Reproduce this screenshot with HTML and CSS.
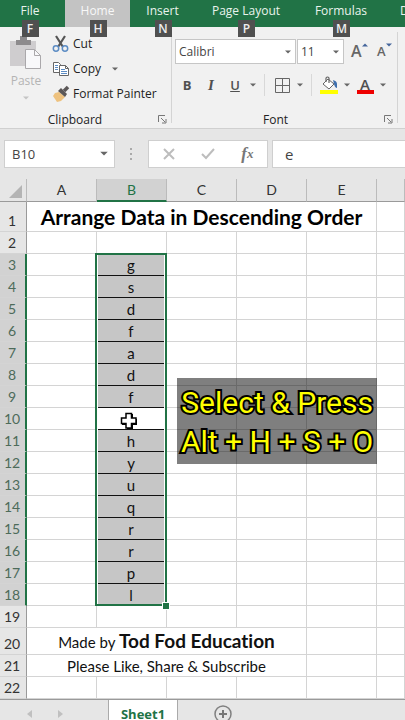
FILE: index.html
```html
<!DOCTYPE html>
<html lang="en">
  <head>
    <meta charset="UTF-8" />
    <meta name="viewport" content="width=device-width, initial-scale=1.0" />
    <title>Arrange Data in Descending Order</title>
    <link rel="stylesheet" href="styles.css">
  </head>
  <body>
    <!-- shared caret -->
    <svg class="defs" width="0" height="0">
      <symbol id="caret" viewBox="0 0 6 4"><path d="M0 0.5h6L3 3.5z" fill="currentColor" /></symbol>
      <symbol id="launcher" viewBox="0 0 9 9">
        <path d="M0.5 7V0.5H7M3 3l4 4M8 4v4H4" fill="none" stroke="currentColor" />
      </symbol>
    </svg>

    <nav class="tabs">
      <button class="tab file">File<kbd>F</kbd></button>
      <button class="tab active">Home<kbd>H</kbd></button>
      <button class="tab insert">Insert<kbd>N</kbd></button>
      <button class="tab layout">Page Layout<kbd>P</kbd></button>
      <button class="tab formulas">Formulas<kbd>M</kbd></button>
      <button class="tab data">Data</button>
    </nav>

    <div class="ribbon">
      <section class="group clipboard">
        <div class="tools">
          <button class="paste" disabled>
            <svg width="32" height="34" viewBox="0 0 32 34">
              <path d="M0 5h26v25H0z" fill="#cfcdcf" />
              <path d="M6 4h4V0h7v4h4v5H6z" fill="#8d8b8d" />
              <path d="M15.500 13.500h9l6 6v13h-15z" fill="#f8f8fa" stroke="#aaa8ab" />
              <path d="M24.500 13.500v6h6" fill="none" stroke="#aaa8ab" />
            </svg>
            <span>Paste</span>
            <svg class="caret" width="6" height="4"><use href="#caret" /></svg>
          </button>
          <div class="actions">
            <button>
              <svg width="18" height="18" viewBox="0 0 18 18">
                <path d="M4 1l7 11M13 1L6 12" stroke="#555" stroke-width="2.200" fill="none" />
                <circle cx="4" cy="13.500" r="2.700" fill="none" stroke="#5c8cc4" stroke-width="1.500" />
                <circle cx="13" cy="13.500" r="2.700" fill="none" stroke="#5c8cc4" stroke-width="1.500" />
              </svg>
              Cut
            </button>
            <button>
              <svg width="18" height="18" viewBox="0 0 18 18">
                <path d="M1.500 2.500h5l2 2v8h-7z" fill="#fff" stroke="#666" />
                <path d="M3 5.500h3M3 7.500h3M3 9.500h3" stroke="#5c8cc4" />
                <path d="M7.500 5.500h6l3 3v7h-9z" fill="#fff" stroke="#666" />
                <path d="M13.500 5.500v3h3" fill="none" stroke="#666" />
                <path d="M9 9.500h4M9 11.500h6M9 13.500h6" stroke="#5c8cc4" />
              </svg>
              Copy
              <svg class="caret" width="6" height="4"><use href="#caret" /></svg>
            </button>
            <button>
              <svg width="18" height="18" viewBox="0 0 18 18">
                <path d="M3 8l4-1 6 5-4 4-4 1-4-6z" fill="#eec27f" />
                <path d="M6 6l3-3 6 6-2 3z" fill="#5b5757" />
                <path d="M12 6l4-4" stroke="#5b5757" stroke-width="3.500" />
              </svg>
              Format Painter
            </button>
          </div>
        </div>
        <div class="group-name">Clipboard</div>
        <button class="launch" aria-label="Clipboard settings"><svg width="9" height="9"><use href="#launcher" /></svg></button>
      </section>

      <section class="group font">
        <div class="tools">
          <div class="row pickers">
            <label class="picker family">
              <select aria-label="Font"><option>Calibri</option></select>
              <svg class="caret" width="6" height="4"><use href="#caret" /></svg>
            </label>
            <label class="picker size">
              <select aria-label="Font size"><option>11</option></select>
              <svg class="caret" width="6" height="4"><use href="#caret" /></svg>
            </label>
            <button class="resize grow" aria-label="Increase font size">A<svg width="6" height="4" viewBox="0 0 6 4"><path d="M0 3.500h6L3 0.500z" fill="#44659b" /></svg></button>
            <button class="resize shrink" aria-label="Decrease font size">A<svg width="6" height="4" viewBox="0 0 6 4"><path d="M0 0.500h6L3 3.500z" fill="#44659b" /></svg></button>
          </div>
          <div class="row styles">
            <button class="tool"><b>B</b></button>
            <button class="tool"><i>I</i></button>
            <button class="tool"><u>U</u></button>
            <button class="more" aria-label="Underline options"><svg class="caret" width="6" height="4"><use href="#caret" /></svg></button>
            <span class="divider"></span>
            <button class="tool" aria-label="Borders">
              <svg width="15" height="15" viewBox="0 0 15 15"><path d="M0.500 0.500h14v14h-14zM7.500 0v15M0 7.500h15" fill="none" stroke="#666" /></svg>
            </button>
            <button class="more" aria-label="Border options"><svg class="caret" width="6" height="4"><use href="#caret" /></svg></button>
            <span class="divider"></span>
            <button class="tool" aria-label="Fill colour">
              <svg width="18" height="18" viewBox="0 0 18 18">
                <path d="M8 3l6 5-5 5-6-5z" fill="#fff" stroke="#666" />
                <path d="M6 6V2q1.500-2 3 0v5" fill="none" stroke="#666" stroke-width="1.200" />
                <path d="M13 4q4 1 4 4v4q-2 0-3-4z" fill="#3f6fae" />
                <path d="M0 14h18v4H0z" fill="#ff0" />
              </svg>
            </button>
            <button class="more" aria-label="Fill options"><svg class="caret" width="6" height="4"><use href="#caret" /></svg></button>
            <button class="tool color">A</button>
            <button class="more" aria-label="Font colour options"><svg class="caret" width="6" height="4"><use href="#caret" /></svg></button>
          </div>
        </div>
        <div class="group-name">Font</div>
        <button class="launch" aria-label="Font settings"><svg width="9" height="9"><use href="#launcher" /></svg></button>
      </section>
    </div>

    <div class="formula-bar">
      <label class="name-box">
        <input type="text" value="B10" aria-label="Name box">
        <svg class="caret" width="8" height="5"><use href="#caret" /></svg>
      </label>
      <svg class="dots" width="2" height="12" viewBox="0 0 2 12"><path d="M0 0h2v2H0zM0 5h2v2H0zM0 10h2v2H0z" fill="#aaa" /></svg>
      <div class="entry">
        <button aria-label="Cancel"><svg width="12" height="12" viewBox="0 0 12 12"><path d="M1 1l10 10M11 1L1 11" stroke="#bdbdbd" stroke-width="2" /></svg></button>
        <button aria-label="Enter"><svg width="14" height="12" viewBox="0 0 14 12"><path d="M1 6l4 4 8-9" fill="none" stroke="#bdbdbd" stroke-width="2" /></svg></button>
        <button class="fx"><i>f</i><sub>x</sub></button>
      </div>
      <input class="formula" type="text" value="e" aria-label="Formula">
    </div>

    <main class="sheet">
      <table>
        <colgroup>
          <col class="num"><col class="col"><col class="col"><col class="col"><col class="col"><col class="col"><col>
        </colgroup>
        <thead>
          <tr>
            <th class="corner"><svg width="13" height="13" viewBox="0 0 13 13"><path d="M13 0v13H0z" fill="#b4b4b4" /></svg></th>
            <th>A</th><th class="picked">B</th><th>C</th><th>D</th><th>E</th><th></th>
          </tr>
        </thead>
        <tbody>
          <tr class="title"><th>1</th><td colspan="5">Arrange Data in Descending Order</td><td></td></tr>
          <tr><th>2</th><td></td><td></td><td></td><td></td><td></td><td></td></tr>
          <tr class="sel"><th>3</th><td></td><td class="pick first"><span>g</span></td><td></td><td></td><td></td><td></td></tr>
          <tr class="sel"><th>4</th><td></td><td class="pick"><span>s</span></td><td></td><td></td><td></td><td></td></tr>
          <tr class="sel"><th>5</th><td></td><td class="pick"><span>d</span></td><td></td><td></td><td></td><td></td></tr>
          <tr class="sel"><th>6</th><td></td><td class="pick"><span>f</span></td><td></td><td></td><td></td><td></td></tr>
          <tr class="sel"><th>7</th><td></td><td class="pick"><span>a</span></td><td></td><td></td><td></td><td></td></tr>
          <tr class="sel"><th>8</th><td></td><td class="pick"><span>d</span></td><td></td><td></td><td></td><td></td></tr>
          <tr class="sel"><th>9</th><td></td><td class="pick"><span>f</span></td><td></td><td></td><td></td><td></td></tr>
          <tr class="sel"><th>10</th><td></td><td class="pick current"><span>
            <svg class="pointer" width="18" height="18" viewBox="0 0 18 18">
              <path d="M7 2h6v5h4v6h-4v4H7v-4H2V7h5z" fill="#000" />
              <path d="M6 1.500h5.500v4.500h4.500v5.500h-4.500v4.500H6v-4.500H1.500V6H6z" fill="#fff" stroke="#000" stroke-width="1.500" />
            </svg>
          </span></td><td></td><td></td><td></td><td></td></tr>
          <tr class="sel"><th>11</th><td></td><td class="pick"><span>h</span></td><td></td><td></td><td></td><td></td></tr>
          <tr class="sel"><th>12</th><td></td><td class="pick"><span>y</span></td><td></td><td></td><td></td><td></td></tr>
          <tr class="sel"><th>13</th><td></td><td class="pick"><span>u</span></td><td></td><td></td><td></td><td></td></tr>
          <tr class="sel"><th>14</th><td></td><td class="pick"><span>q</span></td><td></td><td></td><td></td><td></td></tr>
          <tr class="sel"><th>15</th><td></td><td class="pick"><span>r</span></td><td></td><td></td><td></td><td></td></tr>
          <tr class="sel"><th>16</th><td></td><td class="pick"><span>r</span></td><td></td><td></td><td></td><td></td></tr>
          <tr class="sel"><th>17</th><td></td><td class="pick"><span>p</span></td><td></td><td></td><td></td><td></td></tr>
          <tr class="sel"><th>18</th><td></td><td class="pick last"><span>l</span></td><td></td><td></td><td></td><td></td></tr>
          <tr><th>19</th><td></td><td></td><td></td><td></td><td></td><td></td></tr>
          <tr class="credit"><th>20</th><td colspan="4">Made by <b>Tod Fod Education</b></td><td></td><td></td></tr>
          <tr><th>21</th><td colspan="4">Please Like, Share &amp; Subscribe</td><td></td><td></td></tr>
          <tr><th>22</th><td></td><td></td><td></td><td></td><td></td><td></td></tr>
        </tbody>
      </table>
      <p class="caption">Select &amp; Press<br>Alt + H + S + O</p>
    </main>

    <footer class="sheet-tabs">
      <button class="arrow" aria-label="Previous sheet"><svg width="5" height="8" viewBox="0 0 5 8"><path d="M5 0v8L0 4z" fill="#c0c0c0" /></svg></button>
      <button class="arrow" aria-label="Next sheet"><svg width="5" height="8" viewBox="0 0 5 8"><path d="M0 0v8l5-4z" fill="#c0c0c0" /></svg></button>
      <button class="sheet-tab">Sheet1</button>
      <button class="add" aria-label="New sheet">
        <svg width="18" height="18" viewBox="0 0 18 18"><circle cx="9" cy="9" r="8" fill="none" stroke="#808080" stroke-width="1.500" /><path d="M9 5v8M5 9h8" stroke="#777" stroke-width="2" /></svg>
      </button>
    </footer>
  </body>
</html>
```
FILE: styles.css
```css
* {
  box-sizing: border-box;
}

body {
  margin: 0;
  height: 100vh;
  overflow: hidden;
  display: flex;
  flex-direction: column;
  font-family: "Open Sans", "Noto Sans", sans-serif;
  font-size: 12px;
  color: #222;
  background-color: #e6e6e6;
}

button,
input,
select {
  font: inherit;
  color: inherit;
  background: none;
  border: none;
  border-radius: 0;
  padding: 0;
  margin: 0;
}

svg {
  display: block;
  flex: none;
}

.defs {
  position: absolute;
}

.caret {
  color: #666;
}

/* tabs */
.tabs {
  display: flex;
  flex: none;
  height: 27px;
  background-color: #217346;
  color: #e9f3ed;
}

.tab {
  position: relative;
  flex: none;
  width: 65px;
  padding-bottom: 6px;
  white-space: nowrap;
}

.tab.file {
  padding-right: 5px;
}

.tab.active {
  background-color: #c3c3c3;
  color: #f8f8f8;
}

.tab.layout {
  width: 102px;
}

.tab.formulas {
  width: 88px;
}

.tab.data {
  flex: 1;
  min-width: 0;
  padding-left: 15px;
  overflow: hidden;
  text-align: left;
}

.tab kbd {
  position: absolute;
  z-index: 1;
  top: 20px;
  left: calc(50% - 8px);
  width: 17px;
  height: 17px;
  font: 600 12px/17px "Open Sans", sans-serif;
  color: #eee;
  background-color: #505050;
}

.tab.file kbd {
  left: calc(50% - 11px);
}

/* ribbon */
.ribbon {
  display: flex;
  flex: none;
  background-color: #f1f1f1;
  border-bottom: 1px solid #d0d0d0;
}

.group {
  position: relative;
  flex: none;
  padding-top: 4px;
}

.group::after {
  content: "";
  position: absolute;
  top: 5px;
  bottom: 5px;
  right: 0;
  border-right: 1px solid #d4d4d4;
}

.group.clipboard {
  width: 172px;
}

.group.font {
  width: 226px;
  padding-left: 3px;
}

.tools {
  height: 75px;
}

.group-name {
  padding: 5px 22px 0 0;
  line-height: 17px;
  text-align: center;
}

.launch {
  position: absolute;
  right: 5px;
  bottom: 4px;
  color: #777;
}

.clipboard .tools {
  display: flex;
}

.paste {
  display: flex;
  flex-direction: column;
  align-items: center;
  width: 52px;
  padding-top: 5px;
  color: #b4b4b4;
}

.paste span {
  line-height: 22px;
}

.paste .caret {
  margin-top: 4px;
  color: #c4c4c4;
}

.actions button {
  display: flex;
  align-items: center;
  gap: 3px;
  height: 25px;
}

.actions .caret {
  margin-left: 8px;
}

.row {
  display: flex;
  align-items: center;
}

.pickers {
  height: 40px;
  gap: 1px;
}

.styles {
  height: 28px;
}

.picker {
  position: relative;
  height: 25px;
  background-color: #fff;
  border: 1px solid #c6c6c6;
}

.picker select {
  appearance: none;
  width: 100%;
  height: 100%;
  padding-left: 3px;
  color: #444;
}

.picker .caret {
  position: absolute;
  top: 10px;
  right: 4px;
}

.family {
  width: 121px;
}

.size {
  width: 47px;
}

.resize {
  display: flex;
  align-items: center;
  width: 25px;
  font-size: 16px;
  font-weight: 600;
  color: #666;
  padding-left: 6px;
}

.resize svg {
  margin-bottom: 12px;
}

.resize.shrink {
  font-size: 13px;
}

.tool {
  display: flex;
  justify-content: center;
  align-items: center;
  width: 24px;
  height: 26px;
  font-size: 13px;
  font-weight: 600;
  color: #505050;
}

.tool b {
  font-weight: 700;
}

.tool i {
  font-family: "Liberation Serif", serif;
  font-size: 15px;
  font-weight: 700;
}

.tool.color {
  font-size: 15px;
  line-height: 15px;
  padding-bottom: 2px;
  background: linear-gradient(#e00, #e00) center bottom 4px / 17px 4px no-repeat;
}

.more {
  display: flex;
  justify-content: center;
  width: 12px;
}

.divider {
  height: 22px;
  margin: 0 5px;
  border-left: 1px solid #d8d8d8;
}

/* formula bar */
.formula-bar {
  display: flex;
  align-items: center;
  flex: none;
  height: 50px;
  padding-left: 4px;
  font-size: 13px;
  color: #444;
}

.formula-bar input,
.entry {
  height: 28px;
  background-color: #fff;
  border: 1px solid #cfcfcf;
}

.name-box {
  position: relative;
}

.name-box input {
  display: block;
  width: 111px;
  padding-left: 7px;
}

.name-box .caret {
  position: absolute;
  top: 11px;
  right: 7px;
}

.dots {
  margin: 0 16px 0 15px;
}

.entry {
  display: flex;
  align-items: center;
  width: 120px;
}

.entry button {
  display: flex;
  flex: 1;
  justify-content: center;
}

.entry .fx {
  font: 700 17px/20px "Liberation Serif", serif;
  color: #777;
}

.fx sub {
  font-size: 13px;
  font-style: italic;
}

.formula-bar .formula {
  flex: 1;
  min-width: 0;
  margin-left: 4px;
  padding-left: 12px;
  border-right: none;
  font-size: 15px;
}

/* sheet */
.sheet {
  position: relative;
  flex: 1;
  min-height: 0;
  overflow: hidden;
  background-color: #fff;
}

table {
  width: 100%;
  table-layout: fixed;
  border-collapse: separate;
  border-spacing: 0;
  font-family: Lato, sans-serif;
  font-size: 15px;
  font-variant-ligatures: none;
  line-height: 20px;
  color: #111;
}

.num {
  width: 27px;
}

.col {
  width: 70px;
}

th,
td {
  height: 22px;
  padding: 0;
  font-weight: 400;
  text-align: center;
  white-space: nowrap;
  border-right: 1px solid #d4d4d4;
  border-bottom: 1px solid #d4d4d4;
}

th {
  font-size: 14px;
  color: #333;
  background-color: #e6e6e6;
}

thead th {
  height: 23px;
  border-right-color: #bbb;
  border-bottom-color: #9a9a9a;
}

tbody th {
  padding-right: 2px;
  border-right-color: #9a9a9a;
}

.corner svg {
  margin: 2px 0 0 9px;
}

thead .picked {
  color: #217346;
  background-color: #d2d2d2;
  border-bottom: 2px solid #217346;
}

.title th,
.title td {
  height: 30px;
}

.title td {
  font-size: 21px;
  font-weight: 700;
  color: #000;
}

.title th,
.credit th {
  vertical-align: bottom;
}

.sel th {
  padding-right: 1px;
  color: #4d6b5a;
  background-color: #d2d2d2;
  border-right: 2px solid #217346;
}

.pick {
  position: relative;
  border-bottom: none;
}

.pick span {
  display: block;
  height: 22px;
  margin: 0 2px 0 1px;
  line-height: 22px;
  background-color: #c6c6c6;
  border-bottom: 1px solid #111;
}

.pick.current span {
  background-color: #fff;
}

/* selection frame, drawn over the grid lines */
.pick::before {
  content: "";
  position: absolute;
  top: 0;
  bottom: 0;
  left: -2px;
  right: -1px;
  border: solid #217346;
  border-width: 0 2px;
}

.pick.first::before {
  top: -1px;
  border-top-width: 2px;
}

.pick.last::before {
  border-bottom-width: 2px;
}

.pick.last span {
  border-bottom: none;
}

/* fill handle */
.pick.last::after {
  content: "";
  position: absolute;
  right: -3px;
  bottom: -3px;
  width: 6px;
  height: 6px;
  background-color: #217346;
  outline: 1px solid #fff;
}

.pointer {
  position: absolute;
  top: 4px;
  left: 23px;
}

.credit th,
.credit td {
  height: 27px;
}

.credit b {
  font-size: 19px;
}

.caption {
  position: absolute;
  top: 199px;
  left: 177px;
  margin: 0;
  padding: 5px 4px 3px;
  font-family: Roboto, sans-serif;
  font-size: 30px;
  line-height: 39px;
  text-align: center;
  white-space: nowrap;
  color: #ff0;
  background-color: rgba(0, 0, 0, 0.5);
  -webkit-text-stroke: 4px #000;
  paint-order: stroke fill;
}

/* sheet tabs */
.sheet-tabs {
  display: flex;
  flex: none;
  height: 21px;
  padding-left: 14px;
  overflow: hidden;
  border-top: 1px solid #9a9a9a;
}

.sheet-tabs button {
  display: flex;
  justify-content: center;
  align-items: center;
  height: 28px;
}

.sheet-tabs .arrow {
  width: 31px;
}

.sheet-tabs .sheet-tab {
  width: 70px;
  margin-left: 32px;
  font-size: 13px;
  font-weight: 700;
  line-height: 14px;
  color: #217346;
  background-color: #fff;
  border-left: 1px solid #aaa;
  border-right: 1px solid #aaa;
}

.sheet-tabs .add {
  margin-left: 36px;
}
```
